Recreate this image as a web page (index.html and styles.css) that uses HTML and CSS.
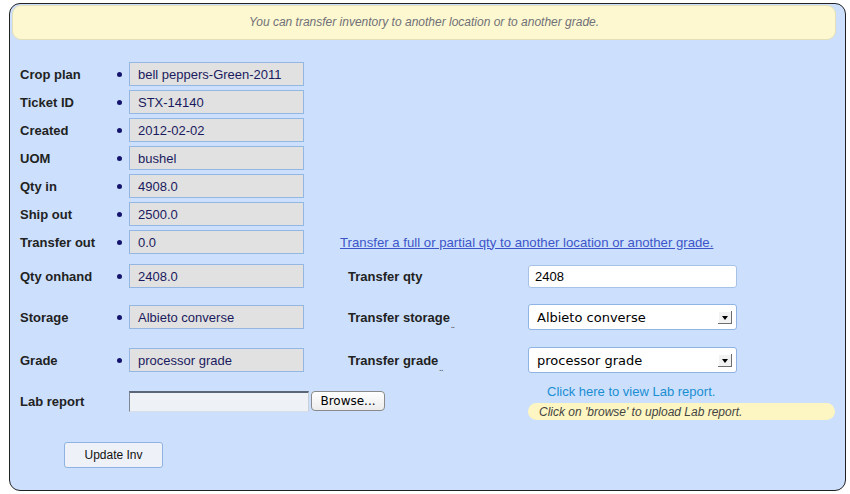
FILE: index.html
```html
<!DOCTYPE html>
<html>
<head>
<meta charset="utf-8">
<link rel="stylesheet" href="styles.css">
</head>
<body>
<div class="panel">
  <div class="banner">You can transfer inventory to another location or to another grade.</div>
  <div class="form">
    <div class="lbl r1">Crop plan</div><div class="dot r1"></div><div class="val r1">bell peppers-Green-2011</div>
    <div class="lbl r2">Ticket ID</div><div class="dot r2"></div><div class="val r2">STX-14140</div>
    <div class="lbl r3">Created</div><div class="dot r3"></div><div class="val r3">2012-02-02</div>
    <div class="lbl r4">UOM</div><div class="dot r4"></div><div class="val r4">bushel</div>
    <div class="lbl r5">Qty in</div><div class="dot r5"></div><div class="val r5">4908.0</div>
    <div class="lbl r6">Ship out</div><div class="dot r6"></div><div class="val r6">2500.0</div>
    <div class="lbl r7">Transfer out</div><div class="dot r7"></div><div class="val r7">0.0</div>
    <div class="linkcell r7"><a class="tlink" href="#">Transfer a full or partial qty to another location or another grade.</a></div>

    <div class="lbl r8">Qty onhand</div><div class="dot r8"></div><div class="val r8">2408.0</div>
    <div class="rlbl r8">Transfer qty</div>
    <div class="rfield r8"><div class="textin">2408</div></div>

    <div class="lbl r9">Storage</div><div class="dot r9"></div><div class="val r9">Albieto converse</div>
    <div class="rlbl r9">Transfer storage<span class="tiny">..</span></div>
    <div class="rfield r9"><div class="sel"><span>Albieto converse</span><span class="arrow"></span></div></div>

    <div class="lbl r10">Grade</div><div class="dot r10"></div><div class="val r10">processor grade</div>
    <div class="rlbl r10">Transfer grade<span class="tiny">..</span></div>
    <div class="rfield r10"><div class="sel"><span>processor grade</span><span class="arrow"></span></div></div>

    <div class="lbl r11">Lab report</div>
    <div class="filecell r11"><div class="filebox"></div><div class="browse">Browse...</div></div>
    <div class="labcell r11">
      <a class="lablink" href="#">Click here to view Lab report.</a>
      <div class="pill">Click on 'browse' to upload Lab report.</div>
    </div>
  </div>
  <div class="btnrow"><div class="btn">Update Inv</div></div>
</div>
</body>
</html>
```

FILE: styles.css
```css
html, body {
  margin: 0;
  padding: 0;
  background: #ffffff;
}
body {
  font-family: "Liberation Sans", Arial, sans-serif;
  font-size: 13px;
}
.panel {
  box-sizing: border-box;
  margin: 3px 4px 0 9px;
  width: 837px;
  height: 488px;
  background: #cce0fd;
  border: 1px solid #222;
  border-radius: 11px;
  padding: 1px 9px 0 2px;
}
.banner {
  box-sizing: border-box;
  height: 35px;
  background: #fdf8cf;
  border: 1px solid #e3dfb8;
  border-radius: 9px;
  font-style: italic;
  font-size: 12px;
  color: #707078;
  display: flex;
  align-items: center;
  justify-content: center;
  padding-bottom: 2px;
}
.form {
  margin-top: 20px;
  margin-left: 8px;
  display: grid;
  grid-template-columns: 90px 19px 175px 44px 180px 209px 98px;
  grid-template-rows: repeat(7, 28px) 40px 42px 44px 38px;
  align-items: center;
}
.r1 { grid-row: 1; } .r2 { grid-row: 2; } .r3 { grid-row: 3; } .r4 { grid-row: 4; }
.r5 { grid-row: 5; } .r6 { grid-row: 6; } .r7 { grid-row: 7; } .r8 { grid-row: 8; }
.r9 { grid-row: 9; } .r10 { grid-row: 10; } .r11 { grid-row: 11; }
.lbl {
  grid-column: 1;
  font-weight: bold;
  color: #222;
}
.dot {
  grid-column: 2;
  justify-self: center;
  width: 5px;
  height: 5px;
  border-radius: 50%;
  background: #14146e;
  margin-left: -1px;
}
.val {
  grid-column: 3;
  box-sizing: border-box;
  height: 24px;
  background: #e1e1e1;
  border: 1px solid #93b7e2;
  color: #1a1a5e;
  padding-left: 8px;
  display: flex;
  align-items: center;
}
.linkcell {
  grid-column: 4 / 8;
  padding-left: 36px;
}
.tlink {
  color: #3c55c8;
  text-decoration: underline;
  font-size: 13.2px;
}
.rlbl {
  grid-column: 5;
  font-weight: bold;
  color: #222;
  position: relative;
}
.tiny {
  font-size: 7px;
  color: #555;
  position: relative;
  top: 6px;
  margin-left: 1px;
}
.rfield {
  grid-column: 6;
}
.textin {
  box-sizing: border-box;
  height: 23px;
  background: #fff;
  border: 1px solid #a6c2e6;
  border-radius: 3px;
  padding-left: 6px;
  display: flex;
  align-items: center;
  color: #000;
  font-size: 13px;
}
.sel {
  box-sizing: border-box;
  height: 26px;
  background: #fff;
  border: 1px solid #8eb3e4;
  border-radius: 3px;
  padding: 0 4px 0 8px;
  display: flex;
  align-items: center;
  justify-content: space-between;
  font-family: "DejaVu Sans", sans-serif;
  font-size: 13px;
  color: #000;
}
.arrow {
  position: relative;
  width: 13px;
  height: 12px;
  background: #f2f2f2;
  border-right: 1px solid #6d6d6d;
  border-bottom: 1px solid #6d6d6d;
  box-shadow: inset 1px 1px 0 #fff;
}
.arrow::after {
  content: "";
  position: absolute;
  left: 4px;
  top: 5px;
  border-left: 3px solid transparent;
  border-right: 3px solid transparent;
  border-top: 4px solid #000;
}
.filecell {
  grid-column: 3 / 6;
  display: flex;
  align-items: center;
}
.filebox {
  box-sizing: border-box;
  width: 180px;
  height: 21px;
  background: #eef2f7;
  border-top: 2px solid #5a6676;
  border-left: 1px solid #7c8694;
  border-right: 1px solid #c8d0da;
  border-bottom: 1px solid #d8dee6;
}
.browse {
  box-sizing: border-box;
  margin-left: 2px;
  width: 74px;
  height: 20px;
  background: linear-gradient(#ffffff, #ececec);
  border: 1px solid #8a8a8a;
  border-radius: 4px;
  font-family: "DejaVu Sans", sans-serif;
  font-size: 12px;
  color: #000;
  display: flex;
  align-items: center;
  justify-content: center;
}
.labcell {
  grid-column: 6 / 8;
  align-self: start;
  margin-top: 2px;
}
.lablink {
  display: block;
  margin-left: 19px;
  color: #1a8ed2;
  text-decoration: none;
  line-height: 16px;
}
.pill {
  margin-top: 3px;
  height: 17px;
  background: #fdf6c2;
  border-radius: 9px;
  padding-left: 11px;
  font-style: italic;
  font-size: 12px;
  color: #444;
  display: flex;
  align-items: center;
}
.btnrow {
  margin-top: 22px;
  padding-left: 52px;
}
.btn {
  box-sizing: border-box;
  width: 99px;
  height: 26px;
  background: #eef2f8;
  border: 1px solid #8eb3e2;
  border-radius: 3px;
  display: flex;
  align-items: center;
  justify-content: center;
  font-size: 12px;
  color: #111;
}
```
